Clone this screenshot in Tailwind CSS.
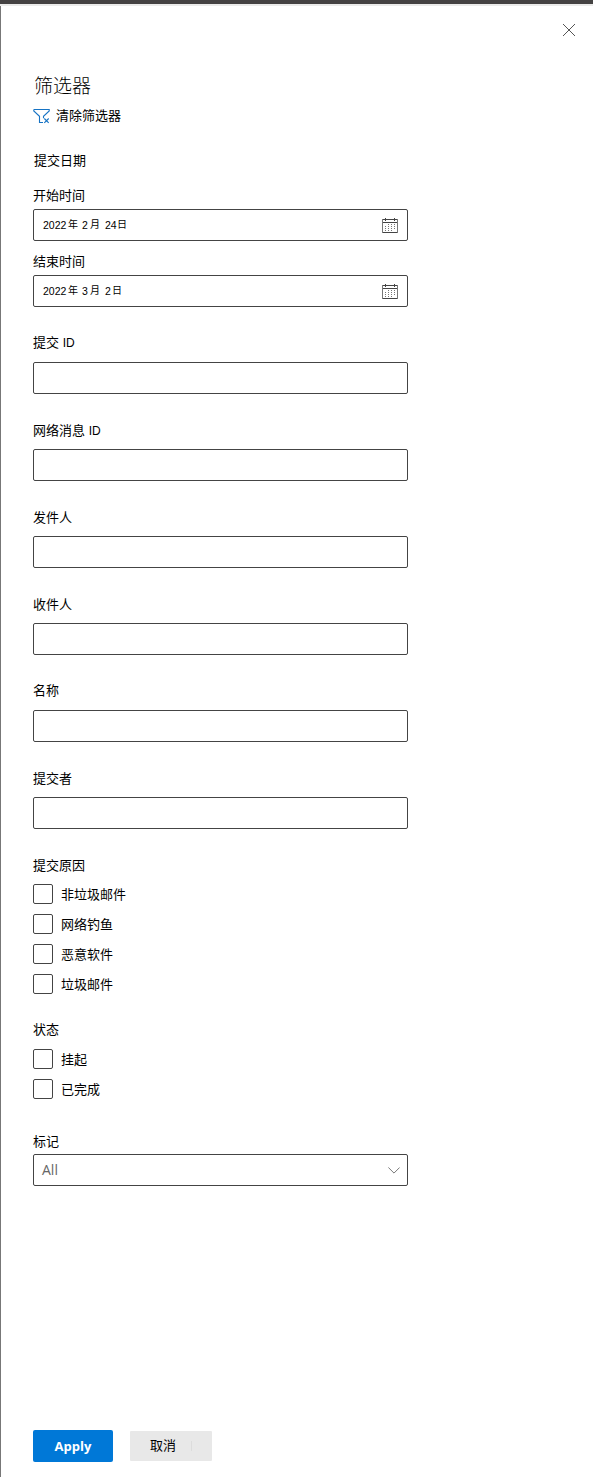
<!DOCTYPE html>
<html lang="zh-CN">
<head>
<meta charset="utf-8">
<title>筛选器</title>
<script src="https://cdn.jsdelivr.net/npm/@tailwindcss/browser@4"></script>
</head>
<body class="bg-white text-black font-['Liberation_Sans','Noto_Sans_CJK_SC',sans-serif] text-[13px] leading-[22px]">
<div class="flex h-[1477px] w-[593px] flex-col overflow-hidden">
  <div class="h-1 shrink-0 bg-[#444242]"></div>
  <div class="h-0.5 shrink-0 bg-[#ebebea]"></div>
  <main class="flex flex-1 flex-col border-l border-[#777777] pb-[15px] pl-8">
    <header class="flex h-[65px] items-start justify-end pr-[17px] pt-[17px]">
      <button aria-label="关闭"><svg class="block" width="14" height="14" viewBox="0 0 14 14" fill="none" stroke="#555"><path d="M1 1l12 12M13 1L1 13"/></svg></button>
    </header>
    <h1 class="h-7 pl-px text-[19px] font-light leading-7 font-['Noto_Sans_CJK_SC',sans-serif]">筛选器</h1>
    <button class="mt-[7px] flex h-5 items-center gap-1.5 self-start">
      <svg width="17" height="16" viewBox="0 0 17 16" fill="none" stroke="#1673c4" stroke-width="1.100"><path d="M.8 1.500h15.400v1.400L10.500 8.300v2M.8 1.500v1.400l5.700 5.400v6.200h3.500"/><path d="M11.300 10.500l4.400 4.400M15.700 10.500l-4.400 4.400"/></svg>
      <span class="leading-5">清除筛选器</span>
    </button>
    <h2 class="mt-6 h-5 pl-px">提交日期</h2>

    <label class="mt-[15px] h-5">开始时间</label>
    <div class="mt-1 flex h-8 w-[375px] items-center justify-between rounded-xs border border-[#444] pl-[9px] pr-[9px] text-[11px]">
      <span class="flex"><span class="w-[25px] text-[10.500px]">2022</span><span class="w-[14px] text-[10px]">年</span><span class="w-[8px] text-[10.500px]">2</span><span class="w-[15px] text-[10px]">月</span><span class="w-[12px] text-[10.500px]">24</span><span class="text-[10px]">日</span></span>
      <svg class="mt-px" width="16" height="16" viewBox="0 0 16 16" fill="none" stroke="#444"><path d="M0 1.500h16M0 4.500h16M0 14.500h16M3.500 0v3M12.500 0v3"/><path stroke="#777" d="M.5 1v14M15.500 1v14"/><path stroke="#777" stroke-dasharray="1 2" d="M6 6.500h8M3 8.500h11M3 10.500h11M3 12.500h8"/></svg>
    </div>
    <label class="mt-2.5 h-5">结束时间</label>
    <div class="mt-1 flex h-8 w-[375px] items-center justify-between rounded-xs border border-[#444] pl-[9px] pr-[9px] text-[11px]">
      <span class="flex"><span class="w-[25px] text-[10.500px]">2022</span><span class="w-[14px] text-[10px]">年</span><span class="w-[8px] text-[10.500px]">3</span><span class="w-[15px] text-[10px]">月</span><span class="w-[7px] text-[10.500px]">2</span><span class="text-[10px]">日</span></span>
      <svg class="mt-px" width="16" height="16" viewBox="0 0 16 16" fill="none" stroke="#444"><path d="M0 1.500h16M0 4.500h16M0 14.500h16M3.500 0v3M12.500 0v3"/><path stroke="#777" d="M.5 1v14M15.500 1v14"/><path stroke="#777" stroke-dasharray="1 2" d="M6 6.500h8M3 8.500h11M3 10.500h11M3 12.500h8"/></svg>
    </div>

    <label class="mt-[25px] h-5">提交 <span class="text-[12px]">ID</span></label>
    <input class="mt-2.5 h-8 w-[375px] rounded-xs border border-[#444]">
    <label class="mt-[26px] h-5">网络消息 <span class="text-[12px]">ID</span></label>
    <input class="mt-[9px] h-8 w-[375px] rounded-xs border border-[#444]">
    <label class="mt-[26px] h-5">发件人</label>
    <input class="mt-[9px] h-8 w-[375px] rounded-xs border border-[#444]">
    <label class="mt-[26px] h-5">收件人</label>
    <input class="mt-[9px] h-8 w-[375px] rounded-xs border border-[#444]">
    <label class="mt-[25px] h-5">名称</label>
    <input class="mt-2.5 h-8 w-[375px] rounded-xs border border-[#444]">
    <label class="mt-[26px] h-5">提交者</label>
    <input class="mt-[9px] h-8 w-[375px] rounded-xs border border-[#444]">

    <h2 class="mt-[26px] h-5">提交原因</h2>
    <div class="mt-[9px] flex flex-col gap-2.5">
      <label class="flex h-5 gap-2"><span class="size-5 rounded-xs border border-[#444]"></span>非垃圾邮件</label>
      <label class="flex h-5 gap-2"><span class="size-5 rounded-xs border border-[#444]"></span>网络钓鱼</label>
      <label class="flex h-5 gap-2"><span class="size-5 rounded-xs border border-[#444]"></span>恶意软件</label>
      <label class="flex h-5 gap-2"><span class="size-5 rounded-xs border border-[#444]"></span>垃圾邮件</label>
    </div>

    <h2 class="mt-[25px] h-5">状态</h2>
    <div class="mt-2.5 flex flex-col gap-2.5">
      <label class="flex h-5 gap-2"><span class="size-5 rounded-xs border border-[#444]"></span>挂起</label>
      <label class="flex h-5 gap-2"><span class="size-5 rounded-xs border border-[#444]"></span>已完成</label>
    </div>

    <label class="mt-8 h-5">标记</label>
    <div class="mt-[3px] flex h-8 w-[375px] items-center justify-between rounded-xs border border-[#444] pl-2 pr-[7px] text-[14px] text-[#666] font-['Open_Sans',sans-serif]">
      <span>All</span>
      <svg width="12" height="7" viewBox="0 0 12 7" fill="none" stroke="#777"><path d="M.4.500L6 6.100 11.600.500"/></svg>
    </div>

    <footer class="mt-auto flex items-center gap-[17px]">
      <button class="h-8 w-20 rounded-xs bg-[#0078d7] text-[13px] font-bold text-white font-['Open_Sans',sans-serif]">Apply</button>
      <button class="flex h-[30px] w-[82px] items-center rounded-[1px] bg-[#e8e8e8] pb-px pl-5">取消<span class="ml-[15px] h-2.5 w-px bg-[#dcdcdc]"></span></button>
    </footer>
  </main>
</div>
</body>
</html>
